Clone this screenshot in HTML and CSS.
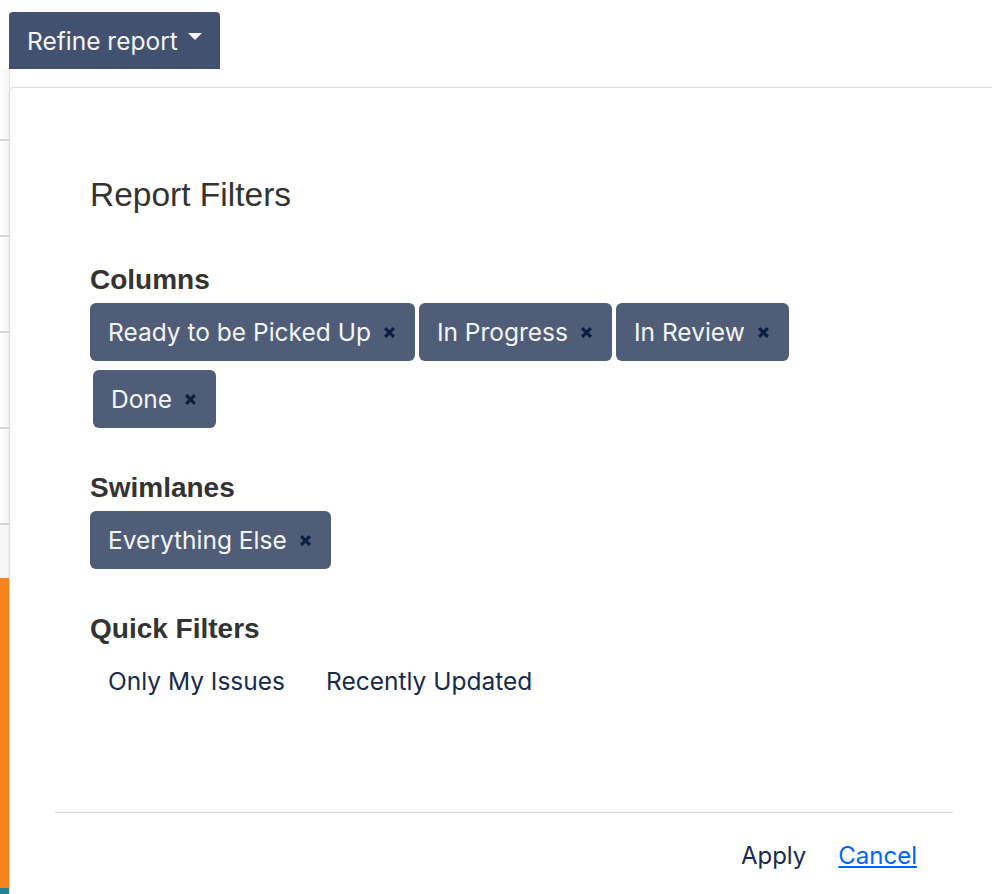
FILE: index.html
```html
<!DOCTYPE html>
<html lang="en">
<head>
    <meta charset="UTF-8">
    <meta name="viewport" content="width=device-width, initial-scale=1.0">
    <title>Refine report</title>
    <link rel="stylesheet" href="styles.css">
</head>
<body>
    <div class="toolbar">
        <button class="refine-btn" type="button">Refine report <span class="caret"></span></button>
    </div>

    <div class="board">
        <div class="board-row first"></div>
        <div class="board-row"></div>
        <div class="board-row"></div>
        <div class="board-row"></div>
        <div class="board-row"></div>
        <div class="board-gap"></div>
        <div class="board-orange"></div>
        <div class="board-teal"></div>
    </div>

    <div class="filter-panel">
        <div class="panel-body">
            <h2 class="panel-title">Report Filters</h2>

            <div class="filter-group">
                <h3>Columns</h3>
                <div class="tags">
                    <span class="tag selected">Ready to be Picked Up <svg class="remove" viewBox="0 0 12 12"><path d="M2 2L10 10M10 2L2 10"/></svg></span>
                    <span class="tag selected">In Progress <svg class="remove" viewBox="0 0 12 12"><path d="M2 2L10 10M10 2L2 10"/></svg></span>
                    <span class="tag selected">In Review <svg class="remove" viewBox="0 0 12 12"><path d="M2 2L10 10M10 2L2 10"/></svg></span>
                    <span class="tag selected wrapped">Done <svg class="remove" viewBox="0 0 12 12"><path d="M2 2L10 10M10 2L2 10"/></svg></span>
                </div>
            </div>

            <div class="filter-group">
                <h3>Swimlanes</h3>
                <div class="tags">
                    <span class="tag selected">Everything Else <svg class="remove" viewBox="0 0 12 12"><path d="M2 2L10 10M10 2L2 10"/></svg></span>
                </div>
            </div>

            <div class="filter-group">
                <h3>Quick Filters</h3>
                <div class="tags">
                    <span class="tag">Only My Issues</span>
                    <span class="tag">Recently Updated</span>
                </div>
            </div>
        </div>

        <div class="panel-footer">
            <button class="apply-btn" type="button">Apply</button>
            <a href="#" class="cancel-link">Cancel</a>
        </div>
    </div>
</body>
</html>
```

FILE: styles.css
```css
html, body {
    margin: 0;
    padding: 0;
    overflow: hidden;
}
body {
    font-family: Inter, "Liberation Sans", sans-serif;
    position: relative;
    height: 894px;
    background: #fff;
}
.toolbar {
    padding: 12px 0 0 9px;
}
.refine-btn {
    display: flex;
    align-items: center;
    width: 211px;
    height: 57px;
    padding: 0 0 0 18px;
    border: none;
    border-radius: 4px 4px 0 0;
    background-color: #435170;
    color: #f4f5f7;
    font-family: Inter, sans-serif;
    font-size: 24.5px;
}
.caret {
    display: inline-block;
    margin-left: 10px;
    margin-top: -8px;
    border-left: 7px solid transparent;
    border-right: 7px solid transparent;
    border-top: 7px solid #f4f5f7;
}

/* board behind the dropdown */
.board {
    width: 9px;
    border-right: 1px solid #e6e6e6;
}
.board-row {
    height: 94px;
    background: linear-gradient(to right, #fff, #f4f4f4);
    border-bottom: 2px solid #d6d6d6;
}
.board-row.first {
    height: 70px;
}
.board-gap {
    height: 53px;
    background: #f7f7f7;
}
.board-orange {
    height: 310px;
    background: #f5841f;
}
.board-teal {
    height: 10px;
    background: #2a7f96;
}

/* dropdown */
.filter-panel {
    position: absolute;
    top: 87px;
    left: 9px;
    right: -8px;
    bottom: -20px;
    background: #fff;
    border: 1px solid #dcdcdc;
    border-radius: 5px;
    box-shadow: 0 1px 3px rgba(0, 0, 0, 0.06);
}
.panel-body {
    padding: 88px 0 102px 80px;
}
.panel-title {
    margin: 0 0 51px;
    font-family: "Liberation Sans", Arial, sans-serif;
    font-weight: normal;
    font-size: 33.5px;
    line-height: 38px;
    color: #333;
}
.filter-group {
    margin-bottom: 45px;
}
.filter-group:last-child {
    margin-bottom: 0;
}
.filter-group h3 {
    margin: 0 0 8px;
    font-family: "Liberation Sans", Arial, sans-serif;
    font-weight: bold;
    font-size: 28px;
    line-height: 30px;
    color: #333;
}
.tags {
    display: flex;
    flex-wrap: wrap;
    gap: 9px 4px;
    max-width: 760px;
}
.tag {
    display: inline-flex;
    align-items: center;
    height: 58px;
    padding: 0 19px 0 18px;
    box-sizing: border-box;
    border-radius: 6px;
    font-size: 24.5px;
    color: #172b4d;
}
.tag.selected {
    background: #4f5d79;
    color: #f4f5f7;
}
.tag.wrapped {
    margin-left: 3px;
}
.remove {
    width: 13px;
    height: 13px;
    margin-left: 12px;
    fill: none;
    stroke: #0c1e40;
    stroke-width: 2.8;
}

.panel-footer {
    margin: 0 46px 0 45px;
    border-top: 1px solid #d0d0d0;
    display: flex;
    justify-content: flex-end;
    align-items: center;
    gap: 32px;
    height: 84px;
    padding-right: 36px;
}
.apply-btn {
    border: none;
    background: none;
    padding: 0;
    font-family: Inter, sans-serif;
    font-size: 24px;
    color: #172b4d;
}
.cancel-link {
    font-size: 24px;
    color: #0065ff;
    text-decoration: underline;
}
```
